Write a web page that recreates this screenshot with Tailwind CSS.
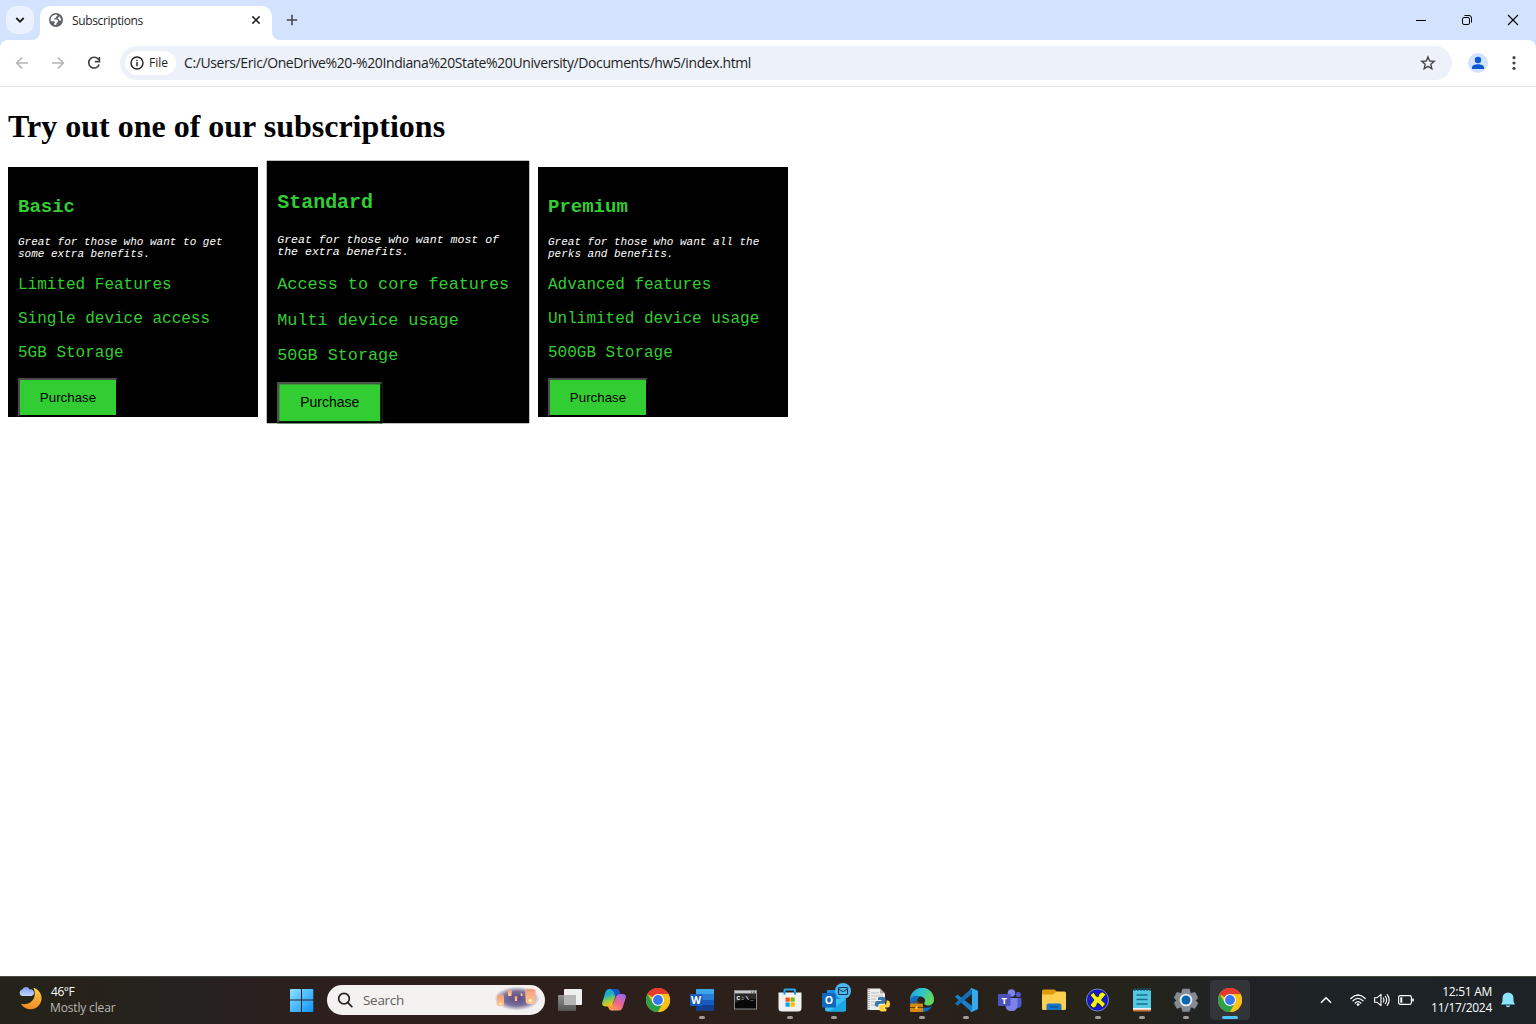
<!DOCTYPE html>
<html lang="en">
<head>
<meta charset="utf-8">
<title>Subscriptions</title>
<script src="https://cdn.jsdelivr.net/npm/@tailwindcss/browser@4"></script>
</head>
<body class="flex h-[1024px] w-[1536px] flex-col overflow-hidden bg-white font-['Open_Sans',sans-serif] text-black">

<!-- Shared gradients and symbols -->
<svg class="absolute h-0 w-0" aria-hidden="true">
  <defs>
    <symbol id="chrome" viewBox="0 0 24 24">
      <circle cx="12" cy="12" r="12" fill="#fbc116"/>
      <path d="M12 12 1.6 6A12 12 0 0 1 22.4 6Z" fill="#e33b2e"/>
      <path d="M1.6 6A12 12 0 0 0 12 24L17.2 15 12 12 6.8 15Z" fill="#2da04a"/>
      <path d="M12 24A12 12 0 0 0 22.4 6H12L17.2 15Z" fill="#fbc116"/>
      <path d="M1.6 6A12 12 0 0 1 22.4 6H12L6.8 9Z" fill="#e33b2e"/>
      <circle cx="12" cy="12" r="6" fill="#fff"/>
      <circle cx="12" cy="12" r="4.9" fill="#3579ee"/>
    </symbol>
  </defs>
</svg>

<!-- Tab strip -->
<header class="flex h-10 shrink-0 items-stretch bg-[#d3e3fd]">
  <button class="ml-1.5 mt-1.5 flex h-7 w-7 items-center justify-center rounded-[10px] bg-[#ebf1fe]">
    <svg class="h-7 w-7" viewBox="0 0 28 28" fill="none" stroke="#1f1f1f" stroke-width="1.8"><path d="m10.3 12 3.7 3.7 3.7-3.7"/></svg>
  </button>
  <div class="relative ml-1.5 mt-1.5 flex h-[34px] w-[232px] items-center rounded-t-[10px] bg-white pl-[9px] pr-[10px] pb-1.5">
    <svg class="absolute -left-2 bottom-0 h-2 w-2" viewBox="0 0 8 8"><path d="M8 0V8H0A8 8 0 0 0 8 0Z" fill="#fff"/></svg>
    <svg class="absolute -right-2 bottom-0 h-2 w-2" viewBox="0 0 8 8"><path d="M0 0V8H8A8 8 0 0 1 0 0Z" fill="#fff"/></svg>
    <svg class="h-[14px] w-[14px]" viewBox="0 0 14 14"><circle cx="7" cy="7" r="7" fill="#5f6368"/><path d="M7.800 1.700 8.600 2.800 7.200 3.700 6.700 4.900 5.200 5.500 5.600 6.500H8L9 7.700 8.700 9.300 7.600 10 7.200 12A5 5 0 0 1 5.300 11.700L5.200 10 6.200 9.200 5 8.300H1.900A5.200 5.200 0 0 1 7.800 1.700ZM10.300 3.300 12.100 6.200 11.900 7.700 10.400 7.400 9.800 6.300 8.500 5.600 9.300 4.500Z" fill="#fff"/></svg>
    <span class="ml-[9px] flex-1 pt-0.5 text-[12px] leading-4 tracking-[-0.36px] text-[#1f1f1f]">Subscriptions</span>
    <svg class="h-3 w-3" viewBox="0 0 12 12" stroke="#1f1f1f" stroke-width="1.5"><path d="m2.400 2.400 7.200 7.200m0-7.200-7.200 7.200"/></svg>
  </div>
  <svg class="ml-[14px] mt-[14px] h-3 w-3" viewBox="0 0 12 12" stroke="#45484d" stroke-width="1.6"><path d="M6 .8v10.4M.8 6h10.4"/></svg>
  <div class="ml-auto flex">
    <svg class="h-10 w-[46px]" viewBox="0 0 46 40" stroke="#000" stroke-width="1"><path d="M18 20.5h10"/></svg>
    <svg class="h-10 w-[46px]" viewBox="0 0 46 40" fill="none" stroke="#000" stroke-width="1"><rect x="18.5" y="17.5" width="7" height="7" rx="1.5"/><path d="M20.500 15.500H25a2.500 2.500 0 0 1 2.500 2.500v4.500"/></svg>
    <svg class="h-10 w-[46px]" viewBox="0 0 46 40" stroke="#000" stroke-width="1.1"><path d="m18 15 10 10m0-10L18 25"/></svg>
  </div>
</header>

<!-- Toolbar -->
<div class="shrink-0 bg-[#d3e3fd]">
  <div class="flex h-[47px] items-center rounded-t-lg border-b border-[#e1e3e1] bg-white">
    <svg class="ml-[14px] h-4 w-4" viewBox="0 0 16 16" fill="none" stroke="#b3b5b8" stroke-width="1.5"><path d="M14 8H2.6M8 2.6 2.6 8 8 13.4"/></svg>
    <svg class="ml-5 h-4 w-4" viewBox="0 0 16 16" fill="none" stroke="#b3b5b8" stroke-width="1.5"><path d="M2 8h11.4M8 2.6 13.4 8 8 13.4"/></svg>
    <svg class="ml-5 h-4 w-4" viewBox="0 0 16 16" fill="none" stroke="#3c4043" stroke-width="1.6"><path d="M12.6 4.6A5.4 5.4 0 1 0 13.2 9.5M13.4 2v4.6H8.8"/></svg>
    <div class="ml-[18px] flex h-[34px] w-[1332px] items-center rounded-full bg-[#ecf1fa] pl-[5px] pr-4">
      <div class="flex h-6 w-[51px] items-center rounded-full bg-white pl-[5px]">
        <svg class="h-[14px] w-[14px]" viewBox="0 0 14 14" fill="none" stroke="#1f1f1f" stroke-width="1.4"><circle cx="7" cy="7" r="6"/><path d="M7 6v4.2M7 3.7v1.4"/></svg>
        <span class="ml-[5px] text-[12px] font-medium leading-4 text-[#1f1f1f]">File</span>
      </div>
      <span class="ml-2 flex-1 whitespace-nowrap text-[14px] leading-5 tracking-[-0.4px] text-[#1f1f1f]">C:/Users/Eric/OneDrive%20-%20Indiana%20State%20University/Documents/hw5/index.html</span>
      <svg class="h-4 w-4" viewBox="0 0 16 16" fill="none" stroke="#474747" stroke-width="1.4"><path d="m8 1.9 1.75 4.1 4.45.4-3.4 2.9 1.05 4.35L8 11.3l-3.85 2.35L5.2 9.3 1.8 6.4 6.25 6Z"/></svg>
    </div>
    <svg class="ml-4 h-5 w-5" viewBox="0 0 20 20"><circle cx="10" cy="10" r="10" fill="#d3e3fd"/><circle cx="10" cy="7" r="3.2" fill="#0b57d0"/><path d="M4 16v-1.5C4 12.3 7 11.3 10 11.3s6 1 6 3.2V16Z" fill="#0b57d0"/></svg>
    <svg class="ml-[18px] h-4 w-4" viewBox="0 0 16 16" fill="#474747"><circle cx="8" cy="2.7" r="1.6"/><circle cx="8" cy="8" r="1.6"/><circle cx="8" cy="13.3" r="1.6"/></svg>
  </div>
</div>

<!-- Page content -->
<main class="flex-1 bg-white px-2 pt-[21px]">
  <h1 class="h-[37px] whitespace-nowrap font-['Liberation_Serif',serif] text-[32px] font-bold leading-[37px]">Try out one of our subscriptions</h1>
  <div class="mt-[22px] flex gap-[15px] font-['Liberation_Mono',monospace] text-[16px] leading-[18px] text-[limegreen]">
    <section class="h-[250px] w-[250px] bg-black p-[10px]">
      <h3 class="mt-5 text-[19px] font-bold leading-[21px]">Basic</h3>
      <p class="mt-[18px] text-[11px] italic leading-3 text-white">Great for those who want to get some extra benefits.</p>
      <p class="mt-4">Limited Features</p>
      <p class="mt-4">Single device access</p>
      <p class="mt-4">5GB Storage</p>
      <button class="mt-4 h-[39px] w-[100px] border-2 border-b-black border-l-[#4c4c4c] border-r-black border-t-[#4c4c4c] bg-[limegreen] font-['Liberation_Sans',sans-serif] text-[13.333px] leading-[15px] text-black">Purchase</button>
    </section>
    <section class="h-[250px] w-[250px] scale-105 bg-black p-[10px]">
      <h3 class="mt-5 text-[19px] font-bold leading-[21px]">Standard</h3>
      <p class="mt-[18px] text-[11px] italic leading-3 text-white">Great for those who want most of the extra benefits.</p>
      <p class="mt-4 whitespace-nowrap">Access to core features</p>
      <p class="mt-4">Multi device usage</p>
      <p class="mt-4">50GB Storage</p>
      <button class="mt-4 h-[39px] w-[100px] border-2 border-b-black border-l-[#4c4c4c] border-r-black border-t-[#4c4c4c] bg-[limegreen] font-['Liberation_Sans',sans-serif] text-[13.333px] leading-[15px] text-black">Purchase</button>
    </section>
    <section class="h-[250px] w-[250px] bg-black p-[10px]">
      <h3 class="mt-5 text-[19px] font-bold leading-[21px]">Premium</h3>
      <p class="mt-[18px] text-[11px] italic leading-3 text-white">Great for those who want all the perks and benefits.</p>
      <p class="mt-4">Advanced features</p>
      <p class="mt-4">Unlimited device usage</p>
      <p class="mt-4">500GB Storage</p>
      <button class="mt-4 h-[39px] w-[100px] border-2 border-b-black border-l-[#4c4c4c] border-r-black border-t-[#4c4c4c] bg-[limegreen] font-['Liberation_Sans',sans-serif] text-[13.333px] leading-[15px] text-black">Purchase</button>
    </section>
  </div>
</main>

<!-- Taskbar -->
<footer class="flex h-12 shrink-0 items-center bg-[linear-gradient(90deg,#23231a_0%,#272219_4%,#252220_12%,#2c201e_19%,#2d1f1c_27%,#2d201b_45%,#2b201c_58%,#26221a_66%,#25241a_73%,#202326_80%,#1d2326_88%,#1c2225_100%)] text-white shadow-[inset_0_1px_0_#484b43]">
  <div class="flex w-[284px] items-center pl-[18px]">
    <svg class="mb-1 h-6 w-6" viewBox="0 0 24 24">
      <defs><linearGradient id="moon" x2="0" y2="1"><stop stop-color="#fbcf44"/><stop offset="1" stop-color="#f08a24"/></linearGradient><linearGradient id="cloud" x2="0" y2="1"><stop stop-color="#7da0f0"/><stop offset="1" stop-color="#c2d5fd"/></linearGradient></defs>
      <path d="M16.500 2A11 11 0 1 1 3 17.700 C9 19.500 15 16 16.300 11 C17.200 7.500 16.500 4 15.500 2Z" fill="url(#moon)"/>
      <path d="M4 10A3.300 3.300 0 0 1 4.200 3.600 4 4 0 0 1 11.600 3.500 3 3 0 0 1 13.500 10Z" fill="url(#cloud)"/>
    </svg>
    <div class="ml-2 text-[12px] leading-4">
      <div class="pl-px tracking-[-0.45px]">46°F</div>
      <div class="tracking-[-0.15px] text-[#b9b8b4]">Mostly clear</div>
    </div>
  </div>
  <svg class="ml-[6px] h-6 w-6" viewBox="0 0 24 24">
    <defs><linearGradient id="win" x2="1" y2="1"><stop stop-color="#8be3ff"/><stop offset="1" stop-color="#0c91fb"/></linearGradient></defs>
    <path d="M1 1H11V11.500H0V2Q0 1 1 1ZM12 1H22.500Q23.300 1 23.300 2V11.500H12ZM0 12.500H11V24H1Q0 24 0 23ZM12 12.500H23.300V23Q23.300 24 22.500 24H12Z" fill="url(#win)"/>
  </svg>
  <div class="ml-[13px] flex h-[30px] w-[218px] items-center rounded-full bg-[#f3f2f1] pl-[10px]">
    <svg class="h-4 w-4" viewBox="0 0 16 16" fill="none" stroke="#222" stroke-width="1.7"><circle cx="7" cy="6.700" r="5.300"/><path d="m10.800 10.700 4 4" stroke-linecap="round"/></svg>
    <span class="ml-[10px] text-[13.500px] leading-5 tracking-[-0.3px] text-[#5f5e5d]">Search</span>
    <svg class="-mt-1 ml-auto mr-[5px] h-[26px] w-[46px]" viewBox="0 0 46 26">
      <defs><radialGradient id="sky"><stop stop-color="#574a80"/><stop offset=".6" stop-color="#796f9b"/><stop offset="1" stop-color="#f3f2f1"/></radialGradient><linearGradient id="lamp" x2="0" y2="1"><stop stop-color="#f09b7b"/><stop offset="1" stop-color="#ffc88d"/></linearGradient></defs>
      <ellipse cx="23" cy="13.500" rx="22.500" ry="12" fill="url(#sky)"/>
      <g fill="url(#lamp)">
        <path d="M3 10.500Q6.500 8.500 10 10.500V19Q10 21 8 21H4.500Q3 21 2.700 19Z"/>
        <path d="M13.500 5.500Q16 4 18 5.500L17.300 11H14.200Z"/>
        <path d="M20.500 11.500Q22 10.500 23.500 11.500L23 16H21Z"/>
        <path d="M26.500 8.500Q27.500 7.500 28.500 8.500V11H26.800Z"/>
        <path d="M31 5Q36 2.500 41.500 5L41 16Q40.500 19 38 19H34.500Q32 19 31.700 16Z"/>
      </g>
      <g fill="#fff0ad"><circle cx="6.500" cy="19" r="1.300"/><circle cx="36.300" cy="15.500" r="1.700"/><circle cx="15.700" cy="9.700" r=".7"/></g>
    </svg>
  </div>

  <!-- Pinned and running apps -->
  <nav class="ml-[3px] flex h-full items-center">
    <div class="flex h-full w-11 items-center justify-center">
      <svg class="h-6 w-6" viewBox="0 0 24 24"><defs><linearGradient id="tv" x2="0" y2="1"><stop stop-color="#919191"/><stop offset="1" stop-color="#555"/></linearGradient></defs><rect x="6" y="1" width="18" height="16" rx="1" fill="#efefef"/><rect y="7" width="18" height="16" rx="1" fill="url(#tv)"/><path d="M6 7h12v10H6Z" fill="#b5b5b5"/></svg>
    </div>
    <div class="flex h-full w-11 items-center justify-center">
      <svg class="h-6 w-6" viewBox="0 0 24 24">
        <defs><linearGradient id="cp1" x2=".3" y2="1"><stop stop-color="#129fe8"/><stop offset=".45" stop-color="#26b2bc"/><stop offset=".7" stop-color="#8ccb4a"/><stop offset="1" stop-color="#f2c51d"/></linearGradient><linearGradient id="cp2" x1=".8" x2=".2" y2="1"><stop stop-color="#9a68f3"/><stop offset=".5" stop-color="#ed638d"/><stop offset="1" stop-color="#ff9e62"/></linearGradient></defs>
        <path d="M17 22.500H10Q7.500 22.500 6.500 19.500L6 17.500H8.500Q10.300 17.500 11 15.500L14 8.500Q14.800 6 17 6H20.500Q24.700 6 23.700 10L20.800 19Q19.800 22.500 17 22.500Z" fill="url(#cp2)"/>
        <path d="M7 1H14.500L14.700 5 10.800 15.500Q9.800 18.500 7 18.500H4Q-.7 18.500 .3 14.500L3.300 4.500Q4.500 1 7 1Z" fill="url(#cp1)"/>
        <path d="M9 1H14.500Q16.700 1 17.500 3L18.300 6H16.500Q14.500 6 13.800 8.500L13 11Q14 6 9 1Z" fill="#1553c9"/>
        <path d="M6 17.500H8.500Q10.500 17.500 11.300 15L10.700 22.500H10Q7.500 22.500 6.500 19.500Z" fill="#ff9c3e"/>
      </svg>
    </div>
    <div class="flex h-full w-11 items-center justify-center"><svg class="h-6 w-6"><use href="#chrome"/></svg></div>
    <div class="relative flex h-full w-11 items-center justify-center">
      <svg class="h-6 w-6" viewBox="0 0 24 24"><rect x="6" y="1" width="18" height="21.500" rx="1" fill="#185abd"/><path d="M7 1H23Q24 1 24 2V6.500H6V2Q6 1 7 1Z" fill="#41a5ee"/><path d="M6 6.500h18V12H6Z" fill="#2b7cd3"/><path d="M6 17h18v4.500q0 1-1 1H7q-1 0-1-1Z" fill="#103f91"/><rect y="6" width="12.500" height="12" rx="1" fill="#185abd"/><text x="6.200" y="15.800" fill="#fff" font-family="Open Sans" font-size="10.500" font-weight="700" text-anchor="middle">W</text></svg>
      <i class="absolute bottom-[5px] h-[3px] w-1.5 rounded-full bg-[#a29d9a]"></i>
    </div>
    <div class="flex h-full w-11 items-center justify-center">
      <svg class="h-6 w-6" viewBox="0 0 24 24"><rect x=".5" y="2.500" width="22" height="18.500" fill="#080808" stroke="#8b8b8b"/><path d="M1 3h21v2.500H1Z" fill="#c9cacb"/><path d="M17 4.200h1m1 0h2" stroke="#4a4a4a"/><path d="M1 6h21v5Q10 10 1 15Z" fill="#2b2b2b"/><text x="2.500" y="12" fill="#fff" font-family="Liberation Mono" font-size="6" font-weight="700" textLength="17">C:\_</text></svg>
    </div>
    <div class="relative flex h-full w-11 items-center justify-center">
      <svg class="h-6 w-6" viewBox="0 0 24 24"><path d="M6.500 6V2Q6.500 1.500 7.200 1.500H16.300Q17 1.500 17 2V6" fill="none" stroke="#29a8ea" stroke-width="2"/><path d="M.5 4.500H23.500V20Q23.500 23.500 20 23.500H4Q.5 23.500 .5 20Z" fill="#f1f1f1"/><path d="M6.500 4v2.500M17 4v2.500" stroke="#1490df" stroke-width="2"/><path d="M7.500 9.500h4.200v4.200H7.500Z" fill="#f25022"/><path d="M12.500 9.500h4.200v4.200h-4.200Z" fill="#7fba00"/><path d="M7.500 14.500h4.200v4.200H7.500Z" fill="#00a4ef"/><path d="M12.500 14.500h4.200v4.200h-4.200Z" fill="#ffb900"/></svg>
      <i class="absolute bottom-[5px] h-[3px] w-1.5 rounded-full bg-[#a29d9a]"></i>
    </div>
    <div class="relative flex h-full w-11 items-center justify-center">
      <svg class="h-6 w-6" viewBox="0 0 24 24"><path d="M5 2H21V16H5Z" fill="#1490df"/><path d="M3 12 24 10.500V21Q24 23.500 21.500 23.500H5.500Q3 23.500 3 21Z" fill="#37c6f2"/><path d="M24 11 7 23.500H21.500Q24 23.500 24 21Z" fill="#1aa7e6"/><rect y="5" width="14" height="14.500" rx="1" fill="#0f68bd"/><text x="7" y="16" fill="#fff" font-family="Open Sans" font-size="10.500" font-weight="700" text-anchor="middle">O</text></svg>
      <svg class="absolute left-[23px] top-[7px] h-4 w-4" viewBox="0 0 16 16"><circle cx="8" cy="8" r="8" fill="#4cb8ef"/><rect x="3.500" y="4.500" width="9" height="7" rx="1" fill="none" stroke="#123b54" stroke-width="1.200"/><path d="m3.500 6 4.500 2.700L12.500 6" fill="none" stroke="#123b54"/></svg>
      <i class="absolute bottom-[5px] h-[3px] w-1.5 rounded-full bg-[#a29d9a]"></i>
    </div>
    <div class="flex h-full w-11 items-center justify-center">
      <svg class="h-6 w-6" viewBox="0 0 24 24"><path d="M1.500.5H14L19 5.500V22H1.500Z" fill="#eee"/><path d="M14 .5V5.500H19Z" fill="#aaa"/><path d="M3 1V22" stroke="#777" stroke-dasharray="1 1"/><path d="M5 5h8M5 8h12M5 11h5M5 14h4M5 17h4" stroke="#bbb"/><path d="M13.500 9H17.500Q19.500 9 19.500 11V14Q19.500 15.800 17.500 15.800H14Q12.200 15.800 12.200 18V18.800H11Q8.800 18.800 8.800 16T11 13H15.500V12H12V10.500Q12 9 13.500 9Z" fill="#3776ab"/><path d="M20.500 12.500H21.500Q24 12.500 24 16T21.500 19.500H17.500V20.500H20.500V22Q20.500 23.500 18.500 23.500H15.500Q13.300 23.500 13.300 21.500V18.500Q13.300 16.800 15 16.800H18.500Q20.500 16.800 20.500 14.500Z" fill="#ffd43b"/></svg>
    </div>
    <div class="relative flex h-full w-11 items-center justify-center">
      <svg class="h-6 w-6" viewBox="0 0 24 24"><defs><linearGradient id="edge" x2="1" y2=".4"><stop stop-color="#219bdf"/><stop offset=".5" stop-color="#2cc3cc"/><stop offset="1" stop-color="#66d95a"/></linearGradient></defs><path d="M0 12A12 12 0 0 1 24 11.500C24 15.500 21 17.500 18 17.500 14.500 17.500 13.500 16 14.500 14.500 16.500 11.500 13.500 8.500 10 8.500 5 8.500 1.500 11 0 15Z" fill="url(#edge)"/><path d="M0 12C1 8.500 5.500 6.800 10 8.500 7 10 6.500 13 8 16 10 20 16 21 22 18.500 19.500 22.500 16 24 12 24A12 12 0 0 1 0 12Z" fill="#116bbf"/><rect y="15.500" width="13" height="8.500" rx="1" fill="#d98713"/><path d="M0 19.500h13M3.800 15.500V14h5.400v1.500" fill="none" stroke="#70400b"/><path d="M5.500 18.500h2v2.500h-2Z" fill="#fbd26b"/></svg>
      <i class="absolute bottom-[5px] h-[3px] w-1.5 rounded-full bg-[#a29d9a]"></i>
    </div>
    <div class="relative flex h-full w-11 items-center justify-center">
      <svg class="h-6 w-6" viewBox="0 0 24 24"><path d="M17.500 0 24 3V21L17.500 24 1 8.800 2.800 7Q3.300 6.600 4 7L18 18V0Z" fill="#1583cd"/><path d="M1 15.500 17.500.2 18 6 4 17.200Q3.300 17.700 2.800 17.200L.8 15.500Z" fill="#1271b8"/><path d="M17.500 0 24 3V21L17.500 24 16 22.800Q18 23 18 21V3Q18 1 16 1.300Z" fill="#35a9f0"/></svg>
      <i class="absolute bottom-[5px] h-[3px] w-1.5 rounded-full bg-[#a29d9a]"></i>
    </div>
    <div class="flex h-full w-11 items-center justify-center">
      <svg class="h-6 w-6" viewBox="0 0 24 24"><circle cx="20.300" cy="6.500" r="2.600" fill="#5059c9"/><path d="M15 10H23.500V15.500Q23.500 20 19.500 20H16Z" fill="#5059c9"/><circle cx="13.500" cy="5" r="3.800" fill="#7b83eb"/><path d="M7.500 10H19.500V17Q19.500 23 13.500 23T7.500 17Z" fill="#7b83eb"/><rect y="6" width="12.500" height="12" rx="1" fill="#4b53bc"/><text x="6.200" y="15.500" fill="#fff" font-family="Open Sans" font-size="9.500" font-weight="700" text-anchor="middle">T</text></svg>
    </div>
    <div class="flex h-full w-11 items-center justify-center">
      <svg class="h-6 w-6" viewBox="0 0 24 24"><path d="M0 3Q0 1.500 1.500 1.500H12.500L14.500 3.500V8H0Z" fill="#df9a0d"/><path d="M0 6.500H11L14.500 3.500H22.500Q24 3.500 24 5V20.500Q24 22 22.500 22H1.500Q0 22 0 20.500Z" fill="#ffcf50"/><path d="M4.500 22V17.500Q4.500 15.500 6.500 15.500H17.500Q19.500 15.500 19.500 17.500V22Z" fill="#1675c7"/><path d="M8 19h8" stroke="#0f5191" stroke-width="1.300"/></svg>
    </div>
    <div class="relative flex h-full w-11 items-center justify-center">
      <svg class="h-6 w-6" viewBox="0 0 24 24"><circle cx="11.500" cy="12" r="11" fill="#1717cf" stroke="#7890b8"/><path d="M4 7 8 4Q9 8 12 9 13 4 17 4L20 6.500 15.500 12 19.500 16 16 20Q15 16.500 11.500 15 10.500 20 7 20L4 17 8 12Z" fill="#f4ee19" stroke="#080840" stroke-width=".8"/></svg>
      <i class="absolute bottom-[5px] h-[3px] w-1.5 rounded-full bg-[#a29d9a]"></i>
    </div>
    <div class="relative flex h-full w-11 items-center justify-center">
      <svg class="h-6 w-6" viewBox="0 0 24 24"><rect x="3" y="2" width="18" height="21" rx="1" fill="#56c7e2"/><path d="M3 20.500h18V22q0 1.500-1.500 1.500h-15Q3 23.500 3 22Z" fill="#c57538"/><path d="M3 20h18v1.700H3Z" fill="#f5f5f5"/><path d="M5 0v3m3-3v3m3-3v3m3-3v3m3-3v3m3-3v3" stroke="#155f7c" stroke-width="1.300"/><path d="M6.500 7h11M6.500 11.500h11M6.500 16h11" stroke="#14718d" stroke-width="1.500"/></svg>
      <i class="absolute bottom-[5px] h-[3px] w-1.5 rounded-full bg-[#a29d9a]"></i>
    </div>
    <div class="relative flex h-full w-11 items-center justify-center">
      <svg class="h-6 w-6" viewBox="0 0 24 24"><path d="M8.500 1H15.500L16.300 4.500 17.500 5.200 21 4.200 24 9.800 21.500 12.500 24 15 21 20.500 17.500 19.300 16.300 20 15.500 23.500H8.500L7.700 20 6.500 19.300 3 20.500 0 15 2.500 12.500 0 9.800 3 4.200 6.500 5.200 7.700 4.500Z" fill="#858b92" stroke="#858b92" stroke-linejoin="round" stroke-width=".5"/><circle cx="12" cy="12" r="6.300" fill="#eaf1f6"/><circle cx="12" cy="12" r="4.500" fill="#0b64ae"/></svg>
      <i class="absolute bottom-[5px] h-[3px] w-1.5 rounded-full bg-[#a29d9a]"></i>
    </div>
    <div class="relative flex h-full w-11 items-center justify-center">
      <div class="flex h-10 w-10 items-center justify-center rounded bg-[#323437]"><svg class="h-6 w-6"><use href="#chrome"/></svg></div>
      <i class="absolute bottom-[5px] h-[3px] w-4 rounded-full bg-[#4cc2ff]"></i>
    </div>
  </nav>

  <!-- System tray -->
  <div class="ml-auto flex items-center pr-5">
    <svg class="h-3 w-3" viewBox="0 0 12 12" fill="none" stroke="#fff" stroke-width="1.500"><path d="M1 8.700 6 3.700 11 8.700"/></svg>
    <svg class="ml-[18px] h-4 w-4" viewBox="0 0 16 16" fill="none" stroke="#fff" stroke-width="1.200" stroke-linecap="round"><path d="M.8 6.500Q8-.5 15.200 6.500M3 8.800Q8 4 13 8.800M5.200 11Q8 8.300 10.800 11"/><circle cx="8" cy="12.500" r="1" fill="#fff" stroke-width=".8"/></svg>
    <svg class="ml-2 h-4 w-4" viewBox="0 0 16 16" fill="none" stroke="#fff" stroke-width="1.100" stroke-linecap="round" stroke-linejoin="round"><path d="M.6 5.700H3.200L7 2.300V13.700L3.200 10.300H.6ZM9.300 6Q10.700 8 9.300 10M11.300 4.300Q14 8 11.300 11.700M13.200 2.700Q17.200 8 13.200 13.300"/></svg>
    <svg class="ml-2 h-4 w-4" viewBox="0 0 16 16" fill="none" stroke="#fff" stroke-width="1.200"><rect x=".6" y="3.600" width="12.800" height="8.800" rx="1.800"/><rect x="2.300" y="5.300" width="2" height="5.400" fill="#fff" stroke="none"/><path d="M15 6.500v3" stroke-width="1.600"/></svg>
    <div class="ml-4 w-[62px] whitespace-nowrap text-right text-[12px] leading-4 tracking-[-0.28px]">
      <div class="-ml-4">12:51 AM</div>
      <div class="-ml-4">11/17/2024</div>
    </div>
    <svg class="ml-2 h-4 w-4" viewBox="0 0 16 16" fill="#8ce5ff"><path d="M8 .5A5.500 5.500 0 0 0 2.500 6V9.500L1 12.500H15L13.500 9.500V6A5.500 5.500 0 0 0 8 .5ZM5.700 13.500H10.300A2.400 2.400 0 0 1 5.700 13.500Z"/></svg>
  </div>
</footer>
</body>
</html>
